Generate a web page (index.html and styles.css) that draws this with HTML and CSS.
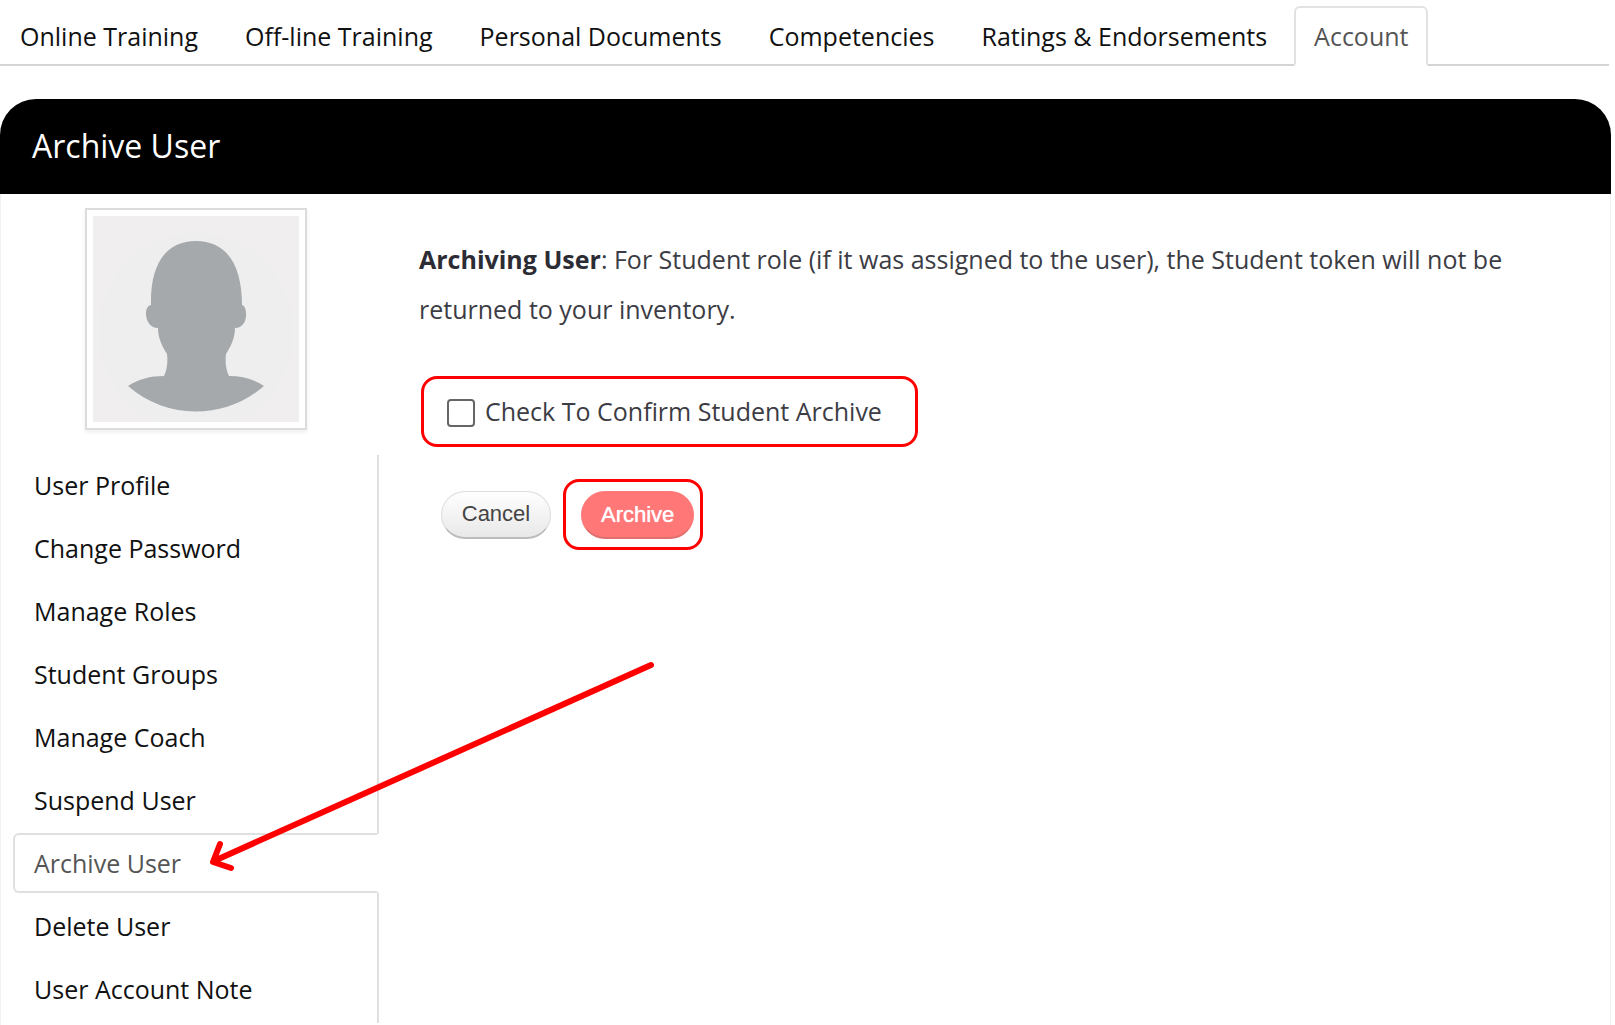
FILE: index.html
```html
<!DOCTYPE html>
<html lang="en">
<head>
<meta charset="utf-8">
<title>Archive User</title>
<link rel="stylesheet" href="styles.css">
</head>
<body>
<nav class="tabs" aria-label="User sections">
  <a class="tab" href="#">Online Training</a>
  <a class="tab" href="#">Off-line Training</a>
  <a class="tab" href="#">Personal Documents</a>
  <a class="tab" href="#">Competencies</a>
  <a class="tab" href="#">Ratings &amp; Endorsements</a>
  <a class="tab tab-active" href="#" aria-current="page">Account</a>
</nav>
<section class="panel">
  <header class="panel-header"><h1 class="panel-title">Archive User</h1></header>
  <div class="panel-body">
    <aside class="sidebar">
      <div class="avatar">
        <svg class="avatar-image" viewBox="0 0 206 206" role="img" aria-label="User photo">
          <rect width="206" height="206" fill="#f0eeee"/>
          <circle cx="103" cy="116" r="98" fill="#eeeeee"/>
          <path fill="#a5a9ac" d="M103 25C133 25 149 48 149 89C155 90 156 112 142 112C142 122 138 130 133 138C132 146 133 154 136 160C149 160 160 163 171 170C132 204 74 204 35 170C46 163 57 160 71 160C74 154 75 146 74 138C69 130 65 122 65 112C51 112 50 90 58 89C57 48 73 25 103 25Z"/>
        </svg>
      </div>
      <nav class="menu" aria-label="Account">
        <a class="menu-item" href="#">User Profile</a>
        <a class="menu-item" href="#">Change Password</a>
        <a class="menu-item" href="#">Manage Roles</a>
        <a class="menu-item" href="#">Student Groups</a>
        <a class="menu-item" href="#">Manage Coach</a>
        <a class="menu-item" href="#">Suspend User</a>
        <a class="menu-item menu-item-active" href="#" aria-current="page">Archive User</a>
        <a class="menu-item" href="#">Delete User</a>
        <a class="menu-item" href="#">User Account Note</a>
      </nav>
    </aside>
    <main class="content">
      <p class="notice"><strong>Archiving User</strong>: For Student role (if it was assigned to the user), the Student token will not be returned to your inventory.</p>
      <form class="archive-form">
        <div class="callout confirm">
          <input class="checkbox" type="checkbox" id="confirm">
          <label for="confirm">Check To Confirm Student Archive</label>
        </div>
        <div class="actions">
          <button class="button" type="button">Cancel</button>
          <div class="callout callout-button">
            <button class="button button-danger" type="submit">Archive</button>
          </div>
        </div>
      </form>
    </main>
  </div>
</section>
<svg class="arrow" viewBox="0 0 452 216" aria-hidden="true">
  <path d="M448 5L11 201M17 184L10 202L28 208"/>
</svg>
</body>
</html>
```
FILE: styles.css
```css
* { box-sizing: border-box; }

body {
  position: relative;
  margin: 0;
  padding: 6px 4px 0 0;
  background: #fff;
  color: #3c3c44;
  font: 25px/50px "Open Sans", "Noto Sans", sans-serif;
}

a { color: #111; text-decoration: none; }

.tabs {
  display: flex;
  gap: 7px;
  margin-right: 2px;
  box-shadow: inset 0 -2px #d4d4d4;
}

.tab {
  height: 60px;
  padding: 3px 18px 0;
  border: 2px solid transparent;
  white-space: nowrap;
}

.tab-active {
  border-color: #e2e2e2;
  border-bottom-color: #fff;
  border-radius: 6px 6px 0 0;
  background: #fff;
  color: #555;
}

.panel {
  margin-top: 33px;
  border: solid #f2f2f2;
  border-width: 0 1px;
  border-radius: 36px 36px 0 0;
}

.panel-header {
  margin: 0 -1px;
  padding: 22px 32px 23px;
  border-radius: 36px 36px 0 0;
  background: #000;
}

.panel-title {
  margin: 0;
  color: #fff;
  font-size: 32px;
  font-weight: 400;
  line-height: 50px;
}

.panel-body { display: flex; }

.sidebar {
  flex: none;
  width: 378px;
  padding: 14px 0 2px 12px;
}

.avatar {
  width: 222px;
  margin: 0 72px 25px;
  padding: 6px;
  border: 2px solid #dcdcdc;
  box-shadow: 0 2px 4px #eee;
}

.avatar-image { display: block; width: 100%; }

.menu {
  display: grid;
  gap: 3px;
  padding-bottom: 4px;
  box-shadow: inset -2px 0 #e0e0e0;
}

.menu-item {
  height: 60px;
  padding: 3px 19px;
  border: 2px solid transparent;
}

.menu-item-active {
  border-color: #e0e0e0;
  border-right-color: #fff;
  border-radius: 6px 0 0 6px;
  background: #fff;
  color: #555;
}

.content {
  flex: 1;
  padding: 40px 60px 0 40px;
}

.notice { margin: 0 0 42px; }
.notice strong { color: #2c2c34; }

.callout {
  border: 3px solid #f00;
  border-radius: 16px;
}

.confirm {
  display: flex;
  align-items: center;
  gap: 10px;
  width: max-content;
  margin-left: 2px;
  padding: 7px 33px 8px 23px;
}

.checkbox {
  appearance: none;
  width: 28px;
  height: 28px;
  margin: 4px 0 0;
  border: 2px solid #666;
  border-radius: 4px;
  background: #fff;
}

.actions {
  display: flex;
  align-items: center;
  gap: 12px;
  margin: 32px 0 0 22px;
}

.callout-button { display: flex; padding: 9px 6px 8px 15px; }

.button {
  min-width: 110px;
  height: 48px;
  padding: 0 19px;
  border: 1px solid #ddd;
  border-bottom: 2px solid #bbb;
  border-radius: 24px;
  background: linear-gradient(#fff, #e8e8e8);
  color: #444;
  font: 22px "Liberation Sans", Arial, sans-serif;
}

.button-danger {
  border-color: #f77 #f77 #e07070;
  background: #f77;
  color: #fff;
  text-shadow: 0 0 1px #fff;
}

.arrow {
  position: absolute;
  left: 203px;
  top: 660px;
  width: 452px;
  height: 216px;
  fill: none;
  stroke: #f00;
  stroke-width: 6px;
  stroke-linecap: round;
  stroke-linejoin: round;
  pointer-events: none;
}
```
